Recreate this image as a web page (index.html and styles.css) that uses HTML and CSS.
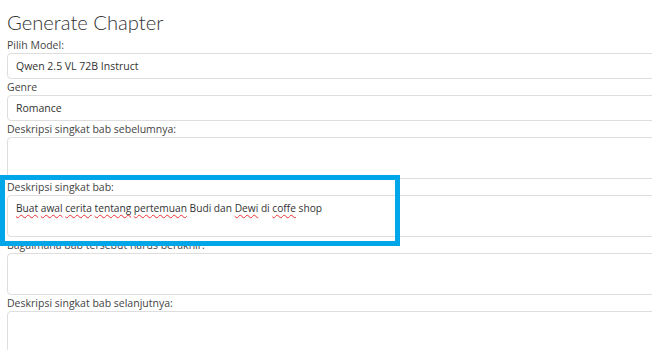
FILE: index.html
```html
<!DOCTYPE html>
<html lang="en">
<head>
    <meta charset="UTF-8">
    <meta name="viewport" content="width=device-width, initial-scale=1.0">
    <title>Generate Chapter</title>
    <link rel="stylesheet" href="styles.css">
</head>
<body>

    <div class="chapter-form">
        <h1>Generate Chapter</h1>

        <label class="field-label">Pilih Model:</label>
        <div class="field">Qwen 2.5 VL 72B Instruct</div>

        <label class="field-label">Genre</label>
        <div class="field">Romance</div>

        <label class="field-label">Deskripsi singkat bab sebelumnya:</label>
        <div class="field area"></div>

        <div class="focus-group">
            <label class="field-label">Deskripsi singkat bab:</label>
            <div class="field area"><span class="typo">Buat</span> <span class="typo">awal</span> <span class="typo">cerita</span> <span class="typo">tentang</span> <span class="typo">pertemuan</span> Budi dan <span class="typo">Dewi</span> di <span class="typo">coffe</span> shop</div>
            <div class="highlight"></div>
        </div>

        <label class="field-label">Bagaimana bab tersebut harus berakhir:</label>
        <div class="field area"></div>

        <label class="field-label">Deskripsi singkat bab selanjutnya:</label>
        <div class="field area"></div>
    </div>

</body>
</html>
```

FILE: styles.css
```css
/* General styling */
html, body {
    margin: 0;
    padding: 0;
    overflow: hidden;
    background: #fff;
}

body {
    font-family: "Open Sans", Arial, sans-serif;
    color: #444;
}

/* Form container */
.chapter-form {
    width: 660px;
    padding: 8px 0 0 7px;
}

.chapter-form h1 {
    font-family: Lato, "Open Sans", sans-serif;
    font-weight: 300;
    font-size: 20.2px;
    line-height: 29px;
    margin: 0;
    color: #333;
}

.field-label {
    display: block;
    font-size: 10.5px;
    line-height: 16px;
    color: #444;
}

.field {
    box-sizing: border-box;
    height: 26px;
    border: 1px solid #dedede;
    border-radius: 4px;
    padding: 0 8px;
    font-size: 10.5px;
    line-height: 24px;
    color: #333;
    background: #fff;
}

.field.area {
    height: 42px;
    padding: 5px 8px;
    font-size: 10.2px;
    line-height: 15px;
}

.typo {
    text-decoration: underline wavy #e33;
    text-decoration-thickness: 1px;
    text-underline-offset: 2px;
}

/* Highlight around the focused field */
.focus-group {
    position: relative;
}

.highlight {
    position: absolute;
    left: -7px;
    top: -4px;
    width: 400px;
    height: 71px;
    box-sizing: border-box;
    border: 5px solid #00a6e8;
}
```
